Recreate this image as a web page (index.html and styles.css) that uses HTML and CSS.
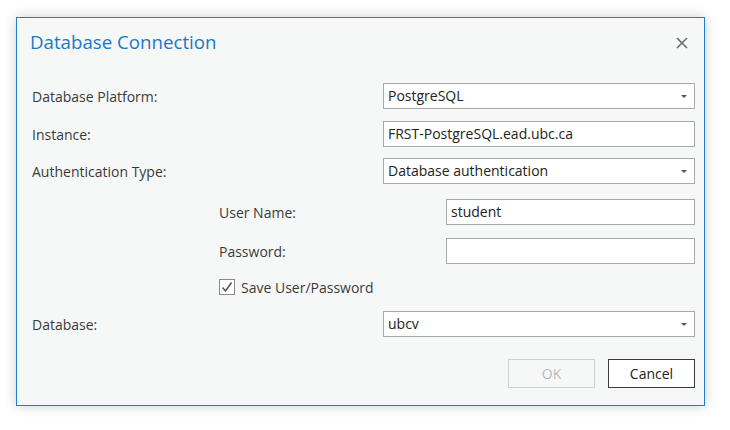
FILE: index.html
```html
<!DOCTYPE html>
<html>
<head>
<meta charset="utf-8">
<link rel="stylesheet" href="styles.css">
</head>
<body>
<div class="dialog">
  <div class="header">
    <div class="title">Database Connection</div>
    <svg class="close" width="12" height="12" viewBox="0 0 12 12"><path d="M1 1 L11 11 M11 1 L1 11" stroke="#6a6a6a" stroke-width="1.5" fill="none"/></svg>
  </div>
  <div class="form">
    <div class="row r1">
      <div class="label">Database Platform:</div>
      <div class="field select">PostgreSQL<span class="arrow"></span></div>
    </div>
    <div class="row r2">
      <div class="label">Instance:</div>
      <div class="field">FRST-PostgreSQL.ead.ubc.ca</div>
    </div>
    <div class="row r3">
      <div class="label">Authentication Type:</div>
      <div class="field select">Database authentication<span class="arrow"></span></div>
    </div>
    <div class="row indent r4">
      <div class="label">User Name:</div>
      <div class="field narrow">student</div>
    </div>
    <div class="row indent r5">
      <div class="label">Password:</div>
      <div class="field narrow"></div>
    </div>
    <div class="check-row">
      <span class="checkbox"><svg width="14" height="14" viewBox="0 0 14 14"><path d="M2.5 7.5 L5.5 11 L11.5 2.5" stroke="#5a5a5a" stroke-width="1.6" fill="none"/></svg></span>
      <span class="check-label">Save User/Password</span>
    </div>
    <div class="row r7">
      <div class="label">Database:</div>
      <div class="field select">ubcv<span class="arrow"></span></div>
    </div>
    <div class="buttons">
      <div class="btn disabled">OK</div>
      <div class="btn">Cancel</div>
    </div>
  </div>
</div>
</body>
</html>
```
FILE: styles.css
```css
html, body {
  margin: 0;
  padding: 0;
  background: #ffffff;
}
body {
  font-family: "Open Sans", "Noto Sans", sans-serif;
  width: 730px;
  height: 430px;
  overflow: hidden;
}
.dialog {
  box-sizing: border-box;
  margin: 17px 0 0 16px;
  width: 689px;
  height: 389px;
  border: 1px solid #1c7fd5;
  background: #f6f8f8;
  box-shadow: 0 0 12px rgba(0, 0, 0, 0.2);
  display: flex;
  flex-direction: column;
}
.header {
  height: 65px;
  box-sizing: border-box;
  padding: 10px 13px 0 13px;
  display: flex;
  justify-content: space-between;
  align-items: flex-start;
}
.title {
  font-size: 18.7px;
  line-height: 28px;
  color: #1b78c8;
}
.close {
  margin-top: 9px;
  margin-right: 3px;
}
.form {
  padding: 0 9px 0 15px;
  display: flex;
  flex-direction: column;
}
.row {
  display: flex;
  align-items: center;
  height: 26px;
}
.label {
  flex: 1;
  font-size: 14px;
  color: #3a3a3a;
  padding-top: 1px;
}
.field {
  box-sizing: border-box;
  width: 312px;
  height: 26px;
  border: 1px solid #a9a9a9;
  background: #ffffff;
  font-size: 14px;
  line-height: 24px;
  color: #222;
  padding-left: 4px;
  position: relative;
}
.field.narrow {
  width: 249px;
}
.arrow {
  position: absolute;
  right: 7px;
  top: 11px;
  width: 0;
  height: 0;
  border-left: 3px solid transparent;
  border-right: 3px solid transparent;
  border-top: 3px solid #555;
}
.indent {
  padding-left: 187px;
}
.r2 { margin-top: 12px; }
.r3 { margin-top: 11px; }
.r4 { margin-top: 15px; }
.r5 { margin-top: 13px; }
.check-row {
  margin-top: 15px;
  padding-left: 187px;
  display: flex;
  align-items: center;
  height: 16px;
}
.checkbox {
  box-sizing: border-box;
  width: 16px;
  height: 16px;
  border: 1px solid #8a8a8a;
  background: #ffffff;
  display: flex;
  align-items: center;
  justify-content: center;
}
.check-label {
  margin-left: 6px;
  font-size: 14px;
  color: #3a3a3a;
}
.r7 { margin-top: 16px; }
.buttons {
  margin-top: 22px;
  display: flex;
  justify-content: flex-end;
  gap: 13px;
}
.btn {
  box-sizing: border-box;
  width: 87px;
  height: 29px;
  border: 1px solid #3a3a3a;
  background: #ffffff;
  font-size: 14px;
  line-height: 27px;
  text-align: center;
  color: #222;
}
.btn.disabled {
  border-color: #cfcfcf;
  background: #f6f8f8;
  color: #b8b8b8;
}
```
